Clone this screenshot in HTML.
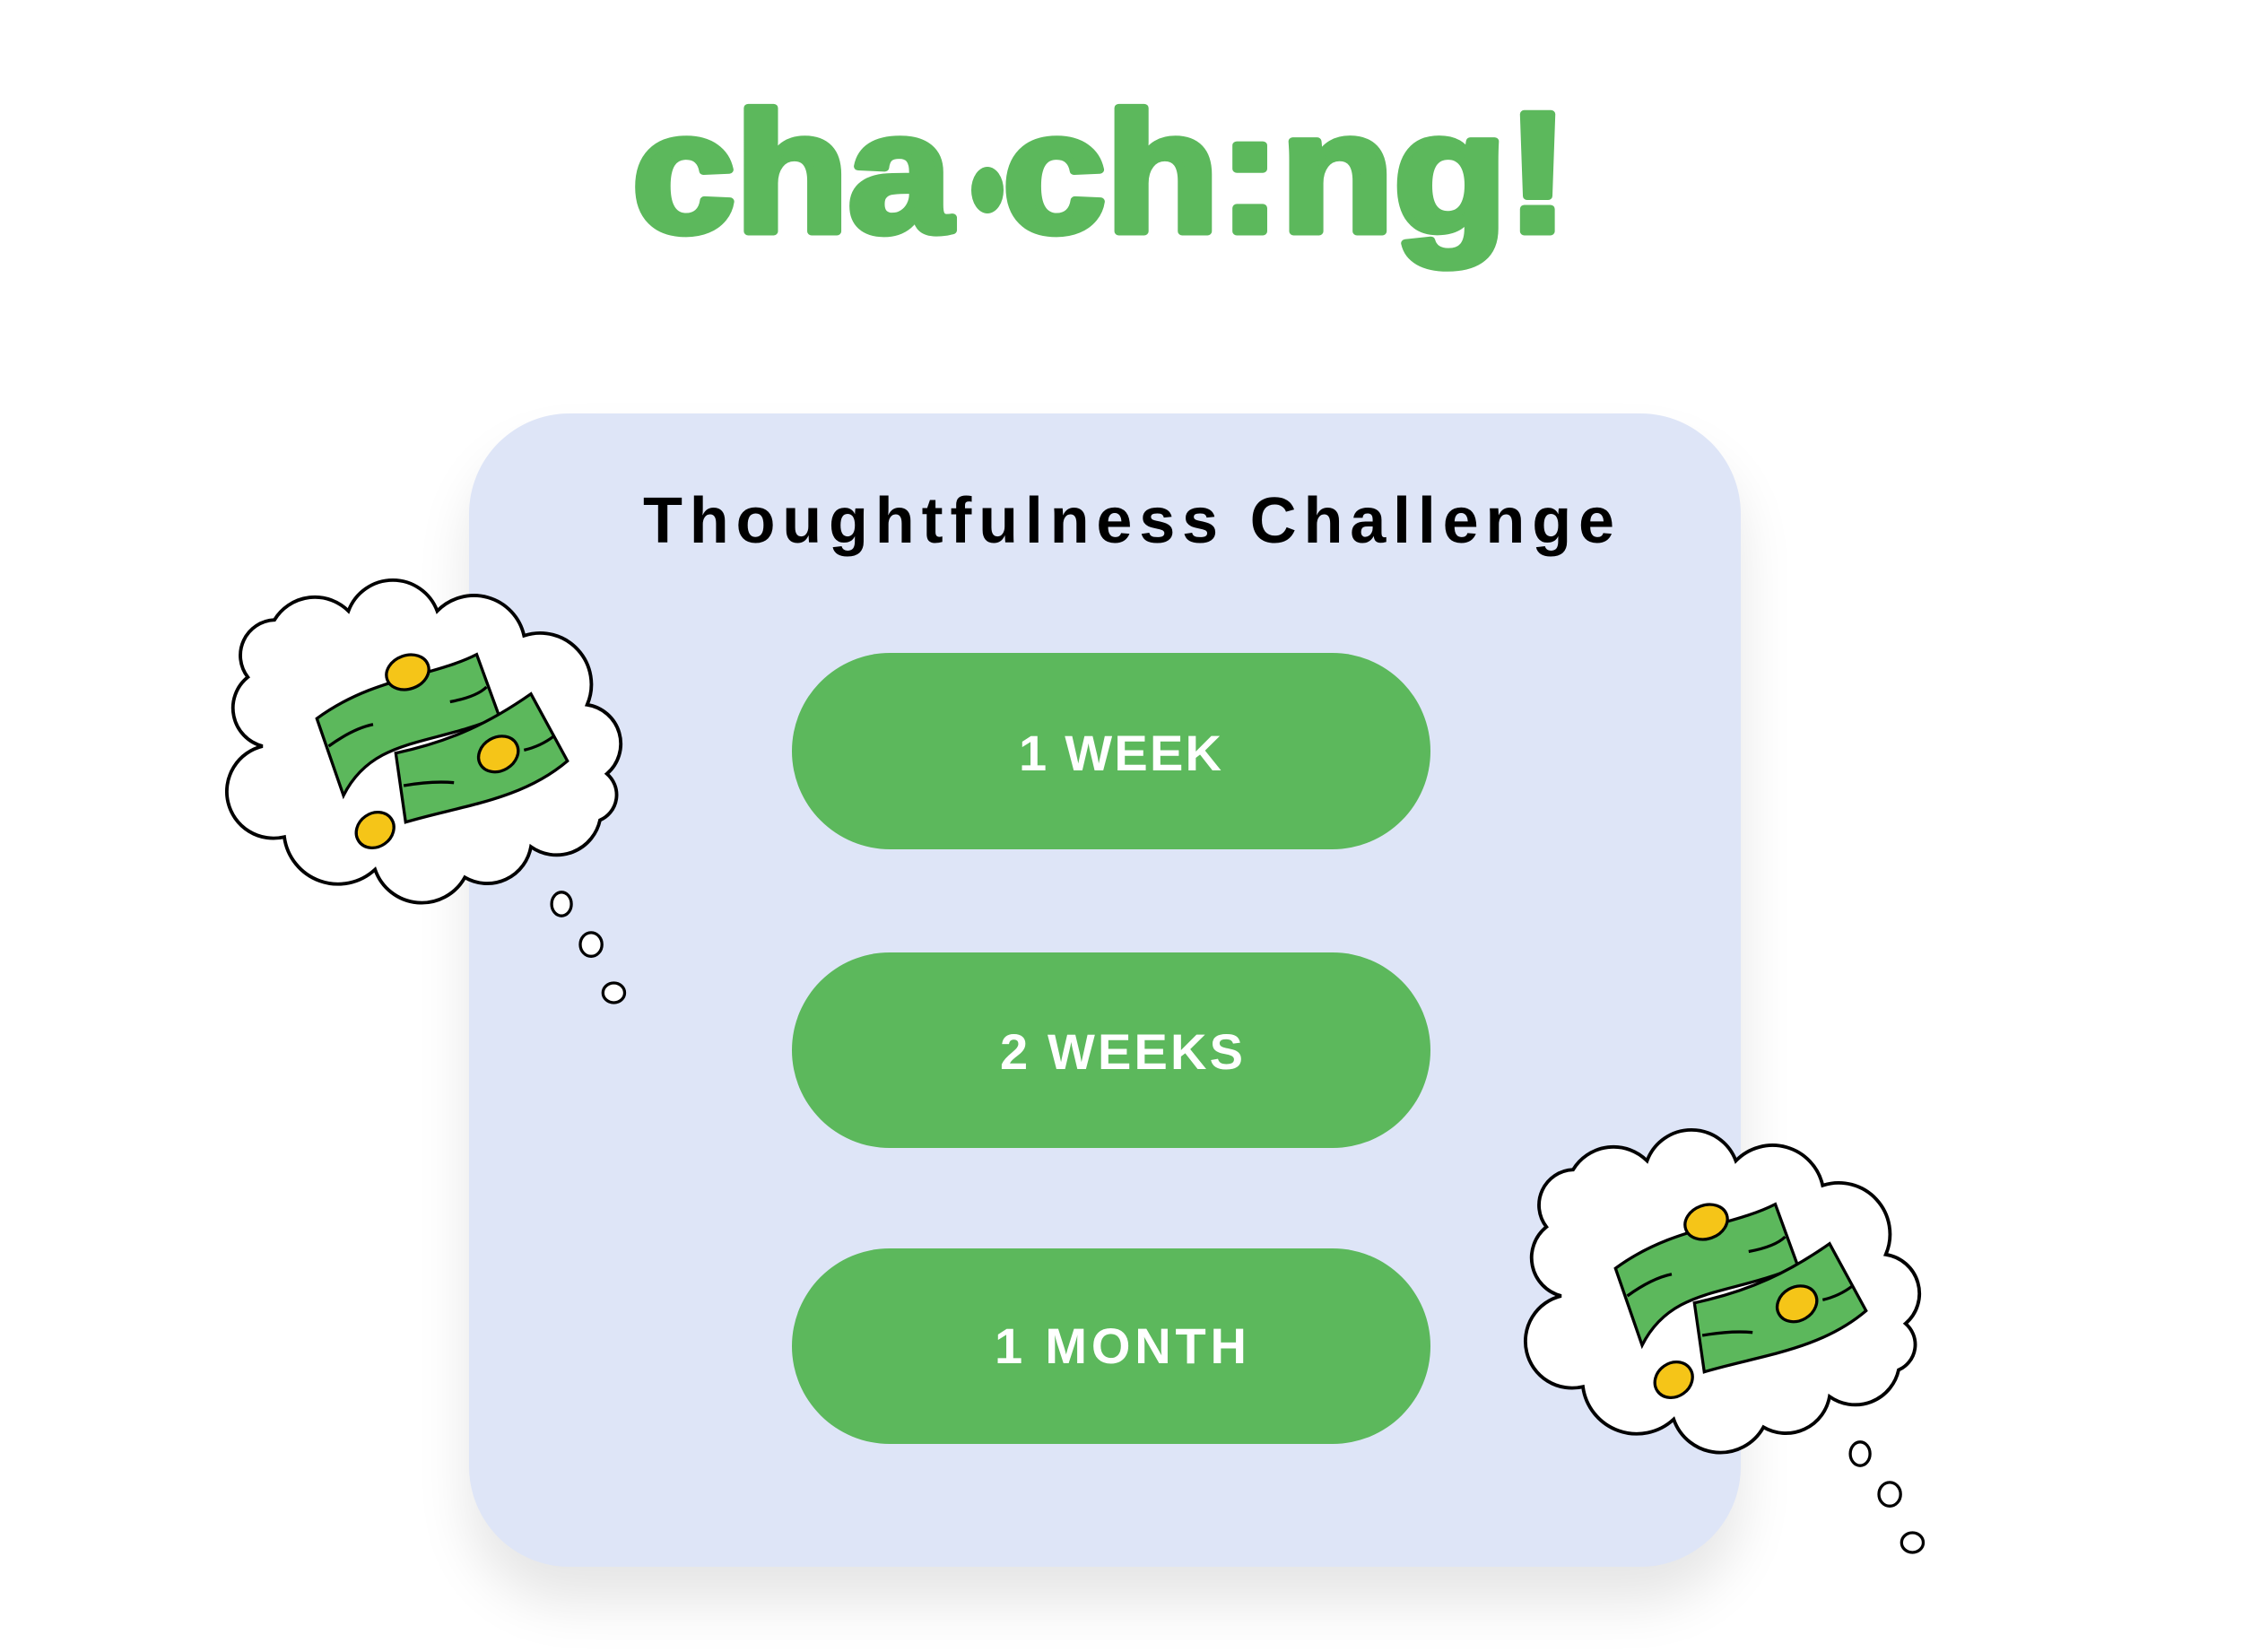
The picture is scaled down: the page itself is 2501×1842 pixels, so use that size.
<!DOCTYPE html>
<html><head><meta charset="utf-8"><style>
html,body{margin:0;padding:0;background:#fff;}
body{width:2501px;height:1842px;position:relative;overflow:hidden;}
.card{position:absolute;left:523px;top:461px;width:1418px;height:1286px;background:#dee5f7;border-radius:112px;box-shadow:0 40px 60px rgba(0,0,0,0.10);}
svg{position:absolute;left:0;top:0;}
</style></head><body>
<div class="card"></div>
<svg width="2501" height="1842" viewBox="0 0 2501 1842">
<defs>
<g id="cloud">
<path d="M53,130 A36,36 0 0 1 80,72 A48,48 0 0 1 155,63 A48,48 0 0 1 245,63 A52,52 0 0 1 333,88 A52,52 0 0 1 397,158 A40,40 0 0 1 417,228 A28,28 0 0 1 410,275 A45,45 0 0 1 340,302 A45,45 0 0 1 273,333 A50,50 0 0 1 182,325 A55,55 0 0 1 90,292 A45,45 0 0 1 68,200 A40,40 0 0 1 53,130 Z" fill="#fff" stroke="#000" stroke-width="3.5"/>
<path d="M123,172 C180,130 240,130 285,107 L308,170 C240,200 180,190 150,250 Z" fill="#5cb85c" stroke="#000" stroke-width="3"/>
<path d="M203,207 C260,195 300,175 340,147 L377,215 C330,255 270,260 213,277 Z" fill="#5cb85c" stroke="#000" stroke-width="3"/>
<path d="M135,200 Q160,182 180,178 M258,155 Q285,150 295,140 M211,240 Q240,235 262,237 M333,204 Q350,200 363,190" fill="none" stroke="#000" stroke-width="3"/>
<ellipse cx="215" cy="125" rx="22" ry="17" fill="#f5c518" stroke="#000" stroke-width="3" transform="rotate(-20 215 125)"/>
<ellipse cx="307" cy="208" rx="21" ry="17" fill="#f5c518" stroke="#000" stroke-width="3" transform="rotate(-30 307 208)"/>
<ellipse cx="182" cy="285" rx="20" ry="17" fill="#f5c518" stroke="#000" stroke-width="3" transform="rotate(-35 182 285)"/>
<ellipse cx="371" cy="360" rx="10" ry="12" fill="#fff" stroke="#000" stroke-width="3"/>
<ellipse cx="401" cy="401" rx="11" ry="12" fill="#fff" stroke="#000" stroke-width="3"/>
<ellipse cx="424" cy="450" rx="11" ry="10" fill="#fff" stroke="#000" stroke-width="3"/>
</g>
</defs>
<text x="705" y="258" textLength="1044" lengthAdjust="spacingAndGlyphs" font-family="Liberation Sans, sans-serif" font-weight="bold" font-size="190" fill="#5cb85c" stroke="#5cb85c" stroke-width="9" stroke-linejoin="round">cha ch:ng!</text>
<ellipse cx="1101" cy="212" rx="18" ry="26" fill="#5cb85c"/>
<text x="717" y="605" textLength="1083" lengthAdjust="spacing" font-family="Liberation Sans, sans-serif" font-weight="bold" font-size="72" fill="#000">Thoughtfulness Challenge</text>
<rect x="883" y="728" width="712" height="219" rx="109.5" fill="#5cb85c"/>
<rect x="883" y="1062" width="712" height="218" rx="109" fill="#5cb85c"/>
<rect x="883" y="1392" width="712" height="218" rx="109" fill="#5cb85c"/>
<text x="1136" y="859" textLength="226" lengthAdjust="spacing" font-family="Liberation Sans, sans-serif" font-weight="bold" font-size="56" fill="#fff">1 WEEK</text>
<text x="1115" y="1192" textLength="271" lengthAdjust="spacing" font-family="Liberation Sans, sans-serif" font-weight="bold" font-size="56" fill="#fff">2 WEEKS</text>
<text x="1109" y="1520" textLength="281" lengthAdjust="spacing" font-family="Liberation Sans, sans-serif" font-weight="bold" font-size="56" fill="#fff">1 MONTH</text>
<use href="#cloud" transform="translate(218,612) scale(1.1)"/>
<use href="#cloud" transform="translate(1666,1225) scale(1.1)"/>
</svg>
</body></html>
